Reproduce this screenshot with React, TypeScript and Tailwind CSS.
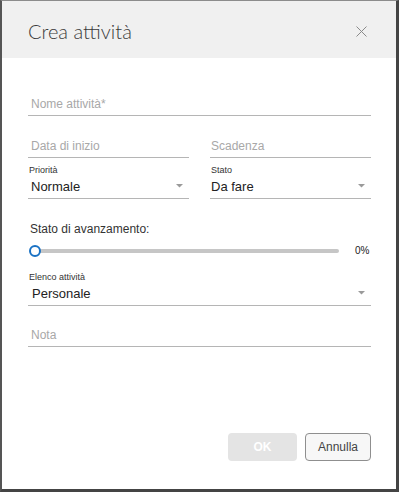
import React from "react";

const Arrow = () => (
  <svg width="7" height="4" viewBox="0 0 7 4" className="mb-[7px]">
    <path d="M0 0 L7 0 L3.5 3.5 Z" fill="#9a9a9a" />
  </svg>
);

export default function App() {
  return (
    <div
      className="w-[399px] h-[492px] bg-white border-t border-l-2 border-r-[3px] border-b-[3px] border-t-[#8c8c8c] border-l-[#555] border-r-[#444] border-b-[#444] flex flex-col"
      style={{ fontFamily: '"Liberation Sans", Arial, sans-serif' }}
    >
      <div className="h-[57px] bg-[#f0f0f0] flex items-center justify-between pl-[26px] pr-[29px] shrink-0">
        <div
          className="text-[20px] font-light text-[#3a3a3a] pt-[2px]"
          style={{ fontFamily: 'Lato, "Open Sans", sans-serif' }}
        >
          Crea attività
        </div>
        <svg width="11" height="11" viewBox="0 0 11 11" className="mt-[3px]">
          <path d="M0.5 0.5 L10.5 10.5 M10.5 0.5 L0.5 10.5" stroke="#8a8a8a" strokeWidth="1" />
        </svg>
      </div>
      <div className="flex-1 flex flex-col pl-[26px] pr-[25px]">
        <div className="mt-[34px] h-[24px] border-b border-[#b5b5b5] flex items-end pb-[3px] pl-[3px]">
          <span className="text-[12px] leading-[16px] text-[#a8a8a8]">Nome attività*</span>
        </div>
        <div className="mt-[18px] grid grid-cols-2 gap-x-[21px]">
          <div className="h-[24px] border-b border-[#b5b5b5] flex items-end pb-[3px] pl-[3px]">
            <span className="text-[12px] leading-[16px] text-[#a8a8a8]">Data di inizio</span>
          </div>
          <div className="h-[24px] border-b border-[#b5b5b5] flex items-end pb-[3px] pl-[1px]">
            <span className="text-[12px] leading-[16px] text-[#a8a8a8]">Scadenza</span>
          </div>
        </div>
        <div className="mt-[6px] grid grid-cols-2 gap-x-[21px]">
          <div className="flex flex-col">
            <div className="h-[12px] text-[9px] leading-[12px] text-[#333] pl-[1px]">Priorità</div>
            <div className="h-[23px] border-b border-[#b5b5b5] flex items-end justify-between pb-[3px] pl-[3px] pr-[6px]">
              <span className="text-[13px] leading-[16px] text-[#222]">Normale</span>
              <Arrow />
            </div>
          </div>
          <div className="flex flex-col">
            <div className="h-[12px] text-[9px] leading-[12px] text-[#333] pl-[1px]">Stato</div>
            <div className="h-[23px] border-b border-[#b5b5b5] flex items-end justify-between pb-[3px] pl-[1px] pr-[6px]">
              <span className="text-[13px] leading-[16px] text-[#222]">Da fare</span>
              <Arrow />
            </div>
          </div>
        </div>
        <div className="mt-[22px] text-[12px] leading-[16px] text-[#333] pl-[2px]">Stato di avanzamento:</div>
        <div className="mt-[7px] h-[14px] flex items-center">
          <div className="relative w-[310px] ml-[1px] h-[14px] flex items-center">
            <div className="w-full h-[4px] rounded-full bg-[#c6c6c6] ml-[4px]" />
            <div className="absolute left-0 top-[1px] w-[12px] h-[12px] rounded-full border-2 border-[#1a72c4] bg-white" />
          </div>
          <span className="ml-[16px] text-[10px] leading-[12px] text-[#222]">0%</span>
        </div>
        <div className="mt-[13px] h-[12px] text-[9px] leading-[12px] text-[#333] pl-[1px]">Elenco attività</div>
        <div className="h-[23px] border-b border-[#b5b5b5] flex items-end justify-between pb-[3px] pl-[4px] pr-[6px]">
          <span className="text-[13px] leading-[16px] text-[#222]">Personale</span>
          <Arrow />
        </div>
        <div className="mt-[17px] h-[24px] border-b border-[#b5b5b5] flex items-end pb-[3px] pl-[3px]">
          <span className="text-[12px] leading-[16px] text-[#a8a8a8]">Nota</span>
        </div>
        <div className="mt-auto mb-[28px] flex justify-end gap-[8px]">
          <div className="w-[69px] h-[28px] rounded-[4px] bg-[#e4e4e4] flex items-center justify-center text-[12px] font-bold text-white">
            OK
          </div>
          <div className="w-[66px] h-[28px] rounded-[4px] border border-[#8f8f8f] bg-[#f7f7f7] flex items-center justify-center text-[12px] text-[#444]">
            Annulla
          </div>
        </div>
      </div>
    </div>
  );
}
